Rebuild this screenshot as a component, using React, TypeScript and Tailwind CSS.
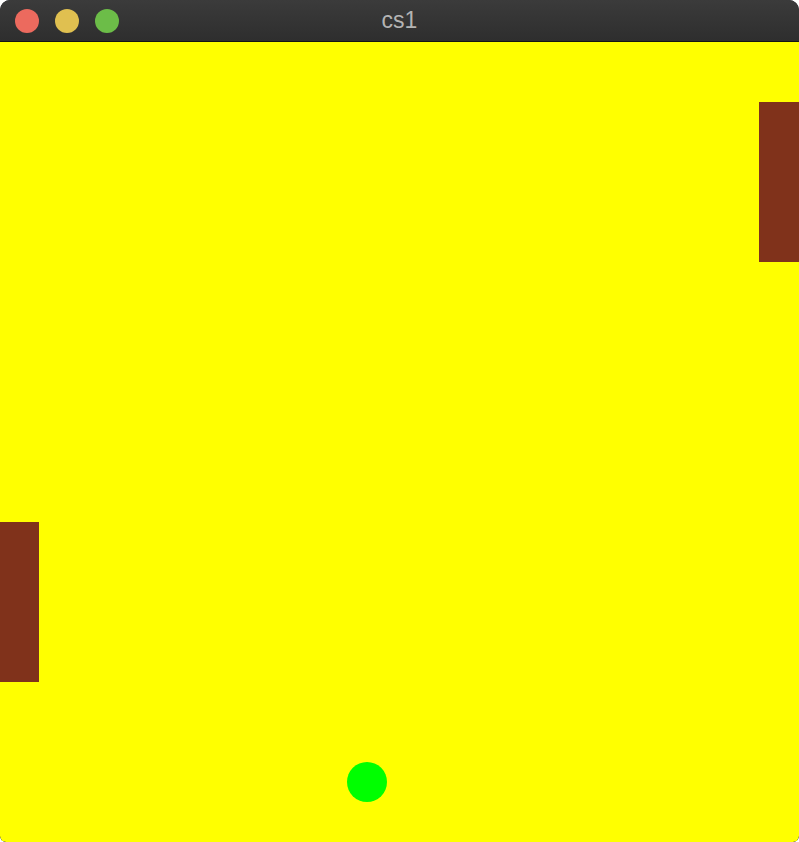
export default function App() {
  return (
    <div className="h-[842px] w-[799px] bg-white">
      <div className="flex h-full w-full flex-col overflow-hidden rounded-t-[10px] rounded-b-[6px] bg-[#1b1e2b]">
        <div className="relative flex h-[42px] shrink-0 items-center border-b border-[#141414] bg-gradient-to-b from-[#3b3b3b] to-[#2e2e2e] pl-[15px]">
          <div className="flex gap-[16px]">
            <span className="h-[24px] w-[24px] rounded-full bg-[#ec6a5e]" />
            <span className="h-[24px] w-[24px] rounded-full bg-[#e0c050]" />
            <span className="h-[24px] w-[24px] rounded-full bg-[#6cbd48]" />
          </div>
          <div className="absolute inset-0 flex items-center justify-center pb-[1px] font-['Helvetica','Liberation_Sans',sans-serif] text-[23px] text-[#b4b4b4]">
            cs1
          </div>
        </div>
        <div className="relative flex-1 rounded-b-[6px] bg-[#ffff00]">
          <div className="absolute left-[759px] top-[60px] h-[160px] w-[40px] bg-[#80321b]" />
          <div className="absolute left-0 top-[480px] h-[160px] w-[39px] bg-[#80321b]" />
          <div className="absolute left-[347px] top-[720px] h-[40px] w-[40px] rounded-full bg-[#00ff00]" />
        </div>
      </div>
    </div>
  );
}
